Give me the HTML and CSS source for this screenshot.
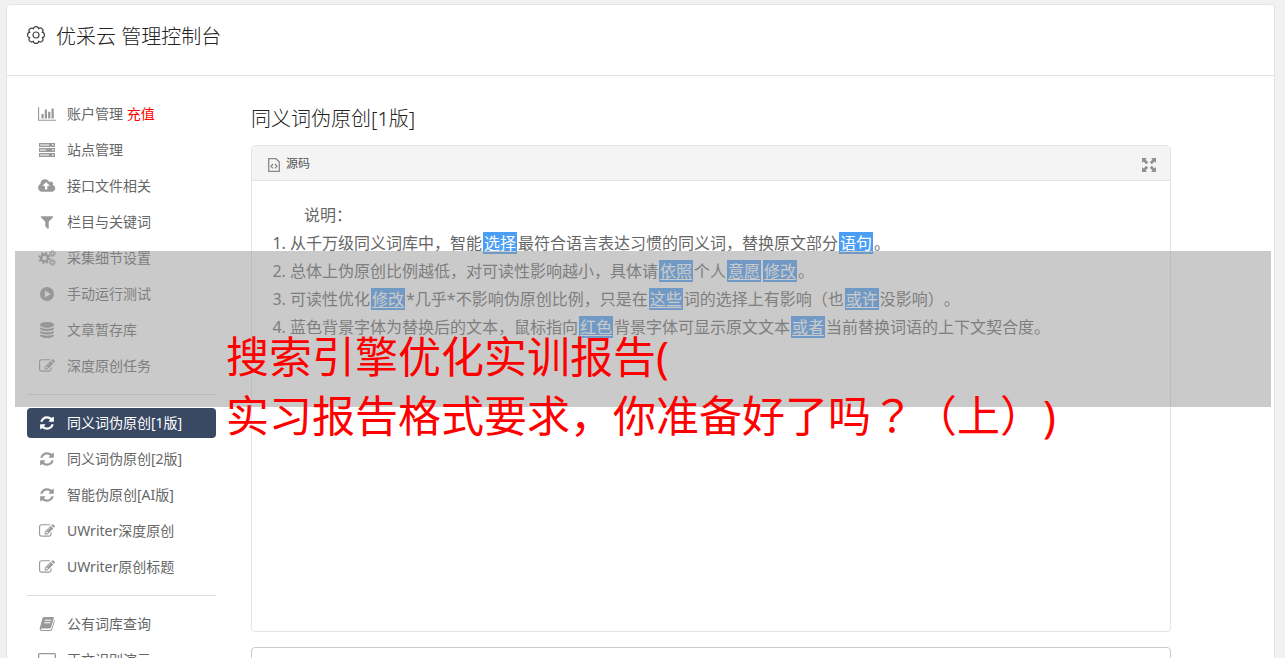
FILE: index.html
```html
<!DOCTYPE html>
<html lang="zh-CN">
  <head>
    <meta charset="UTF-8" />
    <meta name="viewport" content="width=device-width, initial-scale=1.0" />
    <title>优采云 管理控制台</title>
    <link rel="stylesheet" href="styles.css">
  </head>
  <body>
    <!-- 图标 -->
    <svg class="sprite" aria-hidden="true">
      <symbol id="i-gear" viewBox="0 0 18 18">
        <path fill="none" stroke="currentColor" stroke-width="1.2" stroke-linejoin="round" d="M15.200 6.400A2.200 2.600 0 0 1 15.200 11.600A2.500 2.500 0 0 1 11.600 15.200A2.600 2.200 0 0 1 6.400 15.200A2.500 2.500 0 0 1 2.800 11.600A2.200 2.600 0 0 1 2.800 6.400A2.500 2.500 0 0 1 6.400 2.800A2.600 2.200 0 0 1 11.600 2.800A2.500 2.500 0 0 1 15.200 6.400Z" />
        <circle cx="9" cy="9" r="3" fill="none" stroke="currentColor" stroke-width="1.200" />
      </symbol>
      <symbol id="i-chart" viewBox="0 0 2048 1792">
        <path d="M640 896v512h-256v-512h256zm384-512v1024h-256v-1024h256zm1024 1152v128h-2048v-1536h128v1408h1920zm-640-896v768h-256v-768h256zm384-384v1152h-256v-1152h256z" />
      </symbol>
      <symbol id="i-server" viewBox="0 0 18 16">
        <path fill-rule="evenodd" d="M1 1h16v4H1zM2 2.4v1h9v-1zM14 2.2v1.4h1.6V2.2zM1 6h16v4H1zM2 7.4v1h6v-1zM14 7.2v1.4h1.6V7.2zM1 11h16v4H1zM2 12.4v1h9v-1zM14 12.2v1.4h1.6v-1.4z" />
      </symbol>
      <symbol id="i-cloud" viewBox="-64 0 1984 1792">
        <path d="M1216 864q0-14-9-23l-352-352q-9-9-23-9t-23 9l-351 351q-10 12-10 24 0 14 9 23t23 9h224v352q0 13 9.5 22.5t22.5 9.5h192q13 0 22.5-9.5t9.5-22.5v-352h224q13 0 22.5-9.5t9.5-22.5zm640 288q0 159-112.5 271.5t-271.5 112.5h-1088q-185 0-316.5-131.5t-131.5-316.5q0-130 70-240t188-165q-2-30-2-43 0-212 150-362t362-150q156 0 285.5 87t188.5 231q71-62 166-62 106 0 181 75t75 181q0 76-41 138 130 31 213.5 135.5t83.5 238.5z" />
      </symbol>
      <symbol id="i-filter" viewBox="0 0 1792 1792">
        <path d="M1595 295q17 41-14 70l-493 493v742q0 42-39 59-13 5-25 5-27 0-45-19l-256-256q-19-19-19-45v-486l-493-493q-31-29-14-70 17-39 59-39h1280q42 0 59 39z" />
      </symbol>
      <symbol id="i-gears" viewBox="0 0 18 16">
        <g fill="none" stroke="currentColor">
          <circle cx="6.5" cy="8" r="3.4" stroke-width="2.4" />
          <circle cx="6.5" cy="8" r="5.2" stroke-width="1.8" stroke-dasharray="2 2.08" />
          <circle cx="14.4" cy="3.6" r="1.8" stroke-width="1.2" />
          <circle cx="14.4" cy="3.6" r="2.8" stroke-width="1.1" stroke-dasharray="1.2 1" />
          <circle cx="14.4" cy="12.4" r="1.8" stroke-width="1.2" />
          <circle cx="14.4" cy="12.4" r="2.8" stroke-width="1.1" stroke-dasharray="1.2 1" />
        </g>
      </symbol>
      <symbol id="i-play" viewBox="0 0 16 16">
        <path fill-rule="evenodd" d="M8 1a7 7 0 1 1 0 14A7 7 0 0 1 8 1zM5.8 4.4v7.2L11.8 8z" />
      </symbol>
      <symbol id="i-database" viewBox="0 0 1792 1792">
        <path d="M896 768q237 0 443-43t325-127v170q0 69-103 128t-280 93.5-385 34.5-385-34.5-280-93.5-103-128v-170q119 84 325 127t443 43zm0 768q237 0 443-43t325-127v170q0 69-103 128t-280 93.5-385 34.5-385-34.5-280-93.5-103-128v-170q119 84 325 127t443 43zm0-384q237 0 443-43t325-127v170q0 69-103 128t-280 93.5-385 34.5-385-34.5-280-93.5-103-128v-170q119 84 325 127t443 43zm0-1152q208 0 385 34.5t280 93.5 103 128v128q0 69-103 128t-280 93.5-385 34.5-385-34.5-280-93.5-103-128v-128q0-69 103-128t280-93.5 385-34.5z" />
      </symbol>
      <symbol id="i-edit" viewBox="0 0 1792 1792">
        <path d="M888 1184l116-116-152-152-116 116v56h96v96h56zm440-720q-16-16-33 1l-350 350q-17 17-1 33t33-1l350-350q17-17 1-33zm80 594v190q0 119-84.5 203.5t-203.5 84.5h-832q-119 0-203.5-84.5t-84.5-203.5v-832q0-119 84.5-203.5t203.5-84.5h832q63 0 117 25 15 7 18 23 3 17-9 29l-49 49q-14 14-32 8-23-6-45-6h-832q-66 0-113 47t-47 113v832q0 66 47 113t113 47h832q66 0 113-47t47-113v-126q0-13 9-22l64-64q15-15 35-7t20 29zm-96-738l288 288-672 672h-288v-288zm444 132l-92 92-288-288 92-92q28-28 68-28t68 28l152 152q28 28 28 68t-28 68z" />
      </symbol>
      <symbol id="i-refresh" viewBox="0 0 1792 1792">
        <path d="M1639 1056q0 5-1 7-64 268-268 434.5t-478 166.5q-146 0-282.5-55t-243.5-157l-129 129q-19 19-45 19t-45-19-19-45v-448q0-26 19-45t45-19h448q26 0 45 19t19 45-19 45l-137 137q71 66 161 102t187 36q134 0 250-65t186-179q11-17 53-117 8-23 30-23h192q13 0 22.5 9.5t9.5 22.5zm25-800v448q0 26-19 45t-45 19h-448q-26 0-45-19t-19-45 19-45l138-138q-148-137-349-137-134 0-250 65t-186 179q-11 17-53 117-8 23-30 23h-199q-13 0-22.5-9.5t-9.5-22.5v-7q65-268 270-434.5t480-166.5q146 0 284 55.5t245 156.5l130-129q19-19 45-19t45 19 19 45z" />
      </symbol>
      <symbol id="i-book" viewBox="0 0 16 16">
        <path fill-rule="evenodd" d="M5 1h9q1.200 0 .8 1.300L12 11.500q-.4 1-1.400 1H2.600q-.8 0-.8.700t.9.800h8.600q.8 0 1-.7L15.300 4q.7.500.4 1.400l-2.600 8.400Q12.700 15 11.500 15H2.600Q.6 15 .6 12.800L3.400 2.500Q3.800 1 5 1zM6 3.800l-.3 1h6.200l.3-1zM5.300 6.200l-.3 1h6.200l.3-1z" />
      </symbol>
      <symbol id="i-monitor" viewBox="0 0 18 16">
        <path fill-rule="evenodd" d="M1.500 1h15q1.500 0 1.500 1.500v9q0 1.500-1.500 1.500H11v2H7v-2H1.500Q0 13 0 11.500v-9Q0 1 1.500 1zM1.300 2.300v8h15.400v-8z" />
      </symbol>
      <symbol id="i-code" viewBox="0 0 12 14">
        <path fill="none" stroke="currentColor" stroke-width="1.300" d="M.7.700h7.300l3.300 3.300v9.300H.7zM5 6L3 8.200l2 2.200M7 6l2 2.200-2 2.200" />
      </symbol>
      <symbol id="i-expand" viewBox="0 0 14 14">
        <path d="M0 0h5L3.500 1.500 6.200 4.200 4.200 6.200 1.500 3.500 0 5zM14 0v5l-1.500-1.500-2.700 2.700-2-2 2.700-2.700L9 0zM0 14V9l1.500 1.500 2.700-2.700 2 2-2.700 2.700L5 14zM14 14H9l1.500-1.500-2.700-2.700 2-2 2.700 2.700L14 9z" />
      </symbol>
    </svg>

    <div class="page">
      <header class="header">
        <svg class="logo"><use href="#i-gear" /></svg>
        <h1>优采云 管理控制台</h1>
      </header>

      <div class="main">
        <!-- 左侧菜单 -->
        <nav class="sidebar">
          <ul class="menu">
            <li><a href="#"><svg><use href="#i-chart" /></svg><span>账户管理 <b>充值</b></span></a></li>
            <li><a href="#"><svg><use href="#i-server" /></svg>站点管理</a></li>
            <li><a href="#"><svg><use href="#i-cloud" /></svg>接口文件相关</a></li>
            <li><a href="#"><svg><use href="#i-filter" /></svg>栏目与关键词</a></li>
            <li><a href="#"><svg><use href="#i-gears" /></svg>采集细节设置</a></li>
            <li><a href="#"><svg><use href="#i-play" /></svg>手动运行测试</a></li>
            <li><a href="#"><svg><use href="#i-database" /></svg>文章暂存库</a></li>
            <li><a href="#"><svg><use href="#i-edit" /></svg>深度原创任务</a></li>
          </ul>
          <ul class="menu">
            <li><a class="active" href="#"><svg><use href="#i-refresh" /></svg>同义词伪原创[1版]</a></li>
            <li><a href="#"><svg><use href="#i-refresh" /></svg>同义词伪原创[2版]</a></li>
            <li><a href="#"><svg><use href="#i-refresh" /></svg>智能伪原创[AI版]</a></li>
            <li><a href="#"><svg><use href="#i-edit" /></svg>UWriter深度原创</a></li>
            <li><a href="#"><svg><use href="#i-edit" /></svg>UWriter原创标题</a></li>
          </ul>
          <ul class="menu">
            <li><a href="#"><svg><use href="#i-book" /></svg>公有词库查询</a></li>
            <li><a href="#"><svg><use href="#i-monitor" /></svg>正文识别演示</a></li>
          </ul>
        </nav>

        <!-- 右侧内容 -->
        <main class="content">
          <h2>同义词伪原创[1版]</h2>
          <section class="editor">
            <div class="toolbar">
              <button type="button"><svg class="code"><use href="#i-code" /></svg>源码</button>
              <button type="button" aria-label="全屏"><svg class="expand"><use href="#i-expand" /></svg></button>
            </div>
            <div class="text">
              <p>说明：</p>
              <ol>
                <li>从千万级同义词库中，智能<mark>选择</mark>最符合语言表达习惯的同义词，替换原文部分<mark>语句</mark>。</li>
                <li>总体上伪原创比例越低，对可读性影响越小，具体请<mark>依照</mark>个人<mark>意愿</mark><mark>修改</mark>。</li>
                <li>可读性优化<mark>修改</mark>*几乎*不影响伪原创比例，只是在<mark>这些</mark>词的选择上有影响（也<mark>或许</mark>没影响）。</li>
                <li>蓝色背景字体为替换后的文本，鼠标指向<mark>红色</mark>背景字体可显示原文文本<mark>或者</mark>当前替换词语的上下文契合度。</li>
              </ol>
            </div>
          </section>
          <textarea class="source" aria-label="原文"></textarea>
        </main>
      </div>
    </div>

    <!-- 浮层标题，问号居中 -->
    <div class="cover">
      <p>搜索引擎优化实训报告(<br />实习报告格式要求，你准备好了吗<span lang="zh-TW">？</span>（上）)</p>
    </div>
  </body>
</html>
```
FILE: styles.css
```css
* {
  box-sizing: border-box;
  margin: 0;
  padding: 0;
}

body {
  position: relative;
  padding: 4px 10px 0 6px;
  background: #f1f1f1;
  color: #666;
  font-family: "Noto Sans", "Noto Sans CJK SC", sans-serif;
  font-size: 14px;
  /* 全角标点不压缩 */
  text-spacing-trim: space-all;
}

h1,
h2 {
  color: #222;
  font-size: 20px;
  font-weight: 300;
  line-height: 32px;
}

ul {
  list-style: none;
}

svg {
  flex: none;
  fill: currentColor;
}

.sprite {
  position: absolute;
  width: 0;
  height: 0;
}

.page {
  background: #fff;
  border: 1px solid #e4e4e4;
  border-radius: 4px;
}

.header {
  display: flex;
  gap: 11px;
  height: 71px;
  padding: 16px 20px;
  border-bottom: 1px solid #e4e4e4;
}

.logo {
  width: 18px;
  height: 18px;
  margin-top: 5px;
  color: #444;
}

.main {
  display: flex;
  gap: 35px;
  padding: 23px 103px 20px 20px;
}

/* 左侧菜单 */
.sidebar {
  flex: none;
  width: 189px;
}

.menu li {
  padding-bottom: 6px;
}

.menu + .menu {
  margin-top: 7px;
  padding-top: 13px;
  border-top: 1px solid #ddd;
}

.menu a {
  display: flex;
  align-items: center;
  gap: 11px;
  height: 30px;
  padding-left: 11px;
  border-radius: 4px;
  color: #666;
  line-height: 30px;
  text-decoration: none;
}

.menu svg {
  width: 18px;
  height: 16px;
  color: #999;
}

.menu b {
  color: #f00;
  font-weight: 400;
}

.menu .active,
.menu .active svg {
  color: #fff;
}

.menu .active {
  background: #394963;
}

/* 右侧内容 */
.content {
  flex: 1;
  min-width: 0;
  padding-top: 4px;
}

.editor {
  min-height: 487px;
  margin-top: 10px;
  border: 1px solid #e4e4e4;
  border-radius: 4px;
}

.toolbar {
  display: flex;
  justify-content: space-between;
  height: 35px;
  padding: 0 14px 0 16px;
  background: #f4f4f4;
  border-bottom: 1px solid #e4e4e4;
}

.toolbar button {
  display: flex;
  align-items: center;
  gap: 6px;
  border: 0;
  background: none;
  color: #555;
  font-family: inherit;
  font-size: 12px;
}

.toolbar svg {
  margin-top: 4px;
}

.code {
  width: 12px;
  height: 14px;
  color: #888;
}

.expand {
  width: 14px;
  height: 14px;
  color: #909090;
}

.text {
  padding: 20px;
  font-size: 16px;
  line-height: 28px;
}

.text p {
  text-indent: 2em;
}

.text ol {
  padding-left: 18px;
}

.text mark {
  margin: 0 1px;
  padding: 0 1px;
  background: #4a9ef5;
  color: #fff;
  text-decoration: underline;
  text-underline-offset: 2px;
}

.source {
  display: block;
  width: 100%;
  height: 120px;
  margin-top: 15px;
  border: 1px solid #ccc;
  border-radius: 4px;
  resize: none;
}

/* 盖在页面上的浮层 */
.cover {
  position: absolute;
  top: 251px;
  left: 15px;
  right: 14px;
  height: 156px;
  padding: 76px 0 0 211px;
  background: rgba(150, 150, 150, 0.5);
  color: #f00;
  font-size: 43px;
  line-height: 59px;
  white-space: nowrap;
}

.cover span {
  font-family: "Noto Sans CJK TC", sans-serif;
  line-height: 1;
}
```
